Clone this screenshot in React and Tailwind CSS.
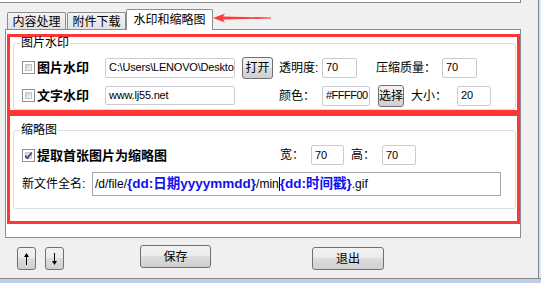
import React from 'react';

// Win7-style classic controls
const btnCls =
  'flex items-center justify-center rounded-[3px] border border-[#707070] bg-[linear-gradient(#f2f2f2_0%,#ebebeb_50%,#dddddd_50%,#cfcfcf_100%)] text-[12px] leading-none text-black';

const inputCls =
  'flex items-center overflow-hidden whitespace-nowrap rounded-[2px] border border-[#c9ccd2] bg-white pl-[3px] text-[11px] leading-none tracking-[-0.2px] text-black';

const Checkbox = ({ checked }) => (
  <div className="relative h-[13px] w-[13px] shrink-0 border border-[#8f8f8f] bg-white p-[2px]">
    <div className="h-full w-full border border-[#c6c6c6] bg-[linear-gradient(135deg,#cfd0d2,#f7f7f7)]" />
    {checked && (
      <svg className="absolute left-0 top-0" width="11" height="11" viewBox="0 0 11 11">
        <path d="M2.2 5.6 L4.4 8 L8.8 2.6" fill="none" stroke="#3a4e86" strokeWidth="1.8" />
      </svg>
    )}
  </div>
);

const Arrow = () => (
  <svg className="absolute left-[212px] top-[12px]" width="60" height="12" viewBox="0 0 60 12">
    <polygon points="1,6 13,1.5 11,4.6 59,5.4 59,6.6 11,7.4 13,10.5" fill="#ff3b3b" />
  </svg>
);

const UpDown = ({ down }) => (
  <svg width="7" height="12" viewBox="0 0 7 12" className={down ? 'rotate-180' : ''}>
    <line x1="3.5" y1="2" x2="3.5" y2="12" stroke="#000" strokeWidth="1" />
    <polygon points="3.5,0 1,4 6,4" fill="#000" />
  </svg>
);

const App = () => {
  return (
    <div className="relative flex h-[283px] w-[541px] flex-col overflow-hidden bg-[#f0f0f0] font-['Liberation_Sans','Noto_Sans_CJK_SC',sans-serif] text-black">
      <div className="flex h-[278px]">
        <div className="w-[538px]">
          {/* box above the tabs */}
          <div className="h-[3px] w-[521px] border-b border-r border-[#8a8a8a] bg-white" />

          {/* Tabs */}
          <div className="mt-[6px] flex h-[20px] items-end pl-[7px]">
            <div className="flex h-[17px] w-[59px] items-center justify-center rounded-t-[2px] border border-b-0 border-[#898c95] bg-[linear-gradient(#f4f4f4,#e2e2e2)] pt-[1px] text-[12px] leading-none">
              内容处理
            </div>
            <div className="ml-[1px] flex h-[17px] w-[59px] items-center justify-center rounded-t-[2px] border border-b-0 border-[#898c95] bg-[linear-gradient(#f4f4f4,#e2e2e2)] pt-[1px] text-[12px] leading-none">
              附件下载
            </div>
            <div className="relative z-10 -mb-px flex h-[21px] w-[87px] items-center justify-center rounded-t-[2px] border border-b-0 border-[#898c95] bg-white pb-[1px] text-[12px] leading-none">
              水印和缩略图
            </div>
          </div>

          {/* Tab panel */}
          <div className="ml-[5px] w-[516px] border border-[#898c95] bg-white pb-[13px] pt-[4px]">
            {/* 图片水印 */}
            <div className="ml-[1px] h-[79px] w-[513px] border-[3px] border-[#ff3636]">
              <fieldset className="ml-[3px] w-[503px] rounded-[3px] border border-[#d5dfe5] pb-[2px]">
                <legend className="ml-[6px] px-[1px] text-[12px] leading-[12px]">图片水印</legend>
                <div className="mt-[7px] flex h-[23px] items-center">
                  <div className="ml-[8px]">
                    <Checkbox />
                  </div>
                  <div className="ml-[2px] w-[68px] text-[13px] font-bold leading-none">图片水印</div>
                  <div className={`${inputCls} h-[20px] w-[130px]`}>C:\Users\LENOVO\Desktop</div>
                  <div className={`${btnCls} ml-[7px] h-[22px] w-[31px]`}>打开</div>
                  <div className="ml-[6px] w-[43px] text-[12px] leading-none">透明度:</div>
                  <div className={`${inputCls} h-[20px] w-[35px]`}>70</div>
                  <div className="ml-[19px] w-[66px] text-[12px] leading-none">压缩质量：</div>
                  <div className={`${inputCls} h-[20px] w-[35px]`}>70</div>
                </div>
                <div className="mt-[5px] flex h-[23px] items-center">
                  <div className="ml-[8px]">
                    <Checkbox />
                  </div>
                  <div className="ml-[2px] w-[68px] text-[13px] font-bold leading-none">文字水印</div>
                  <div className={`${inputCls} h-[19px] w-[130px]`}>www.lj55.net</div>
                  <div className="ml-[44px] w-[43px] text-[12px] leading-none">颜色：</div>
                  <div className={`${inputCls} h-[20px] w-[48px] tracking-[-0.5px]`}>#FFFF00</div>
                  <div className={`${btnCls} ml-[8px] h-[22px] w-[26px]`}>选择</div>
                  <div className="ml-[7px] w-[46px] text-[12px] leading-none">大小：</div>
                  <div className={`${inputCls} h-[20px] w-[34px]`}>20</div>
                </div>
              </fieldset>
            </div>

            {/* 缩略图 */}
            <div className="ml-[1px] h-[111px] w-[513px] border-[3px] border-[#ff3636]">
              <fieldset className="ml-[3px] mt-[8px] w-[503px] rounded-[3px] border border-[#d5dfe5] pb-[12px]">
                <legend className="ml-[6px] px-[1px] text-[12px] leading-[12px]">缩略图</legend>
                <div className="mt-[9px] flex h-[20px] items-center">
                  <div className="ml-[8px]">
                    <Checkbox checked />
                  </div>
                  <div className="ml-[2px] w-[243px] text-[13px] font-bold leading-none">提取首张图片为缩略图</div>
                  <div className="w-[31px] text-[12px] leading-none">宽：</div>
                  <div className={`${inputCls} h-[20px] w-[33px]`}>70</div>
                  <div className="ml-[7px] w-[31px] text-[12px] leading-none">高：</div>
                  <div className={`${inputCls} h-[20px] w-[34px]`}>70</div>
                </div>
                <div className="mt-[7px] flex h-[24px] items-center">
                  <div className="ml-[8px] w-[70px] text-[12px] leading-none">新文件全名:</div>
                  <div className="flex h-[24px] w-[409px] items-center overflow-hidden whitespace-nowrap border border-[#a5a7ad] bg-white pl-[2px] text-[12px] leading-none">
                    <span>/d/file/</span>
                    <span className="text-[13.5px] font-bold text-[#1010f0]">{'{dd:日期yyyymmdd}'}</span>
                    <span>/min</span>
                    <span className="h-[14px] w-px bg-black" />
                    <span className="text-[13.5px] font-bold text-[#1010f0]">{'{dd:时间戳}'}</span>
                    <span>.gif</span>
                  </div>
                </div>
              </fieldset>
            </div>
          </div>

          {/* Bottom buttons */}
          <div className="flex h-[40px] items-start">
            <div className={`${btnCls} ml-[17px] mt-[9px] h-[23px] w-[19px]`}>
              <UpDown />
            </div>
            <div className={`${btnCls} ml-[9px] mt-[9px] h-[23px] w-[19px]`}>
              <UpDown down />
            </div>
            <div className={`${btnCls} ml-[76px] mt-[7px] h-[23px] w-[71px]`}>保存</div>
            <div className={`${btnCls} ml-[101px] mt-[9px] h-[23px] w-[72px]`}>退出</div>
          </div>
        </div>
        <div className="w-[3px] border-l border-[#7f8690] bg-[#dbe4ee]" />
      </div>
      <div className="h-[5px] border-t border-[#8a8a8a] bg-[#bcd1e8]" />

      <Arrow />
    </div>
  );
};

export default App;
